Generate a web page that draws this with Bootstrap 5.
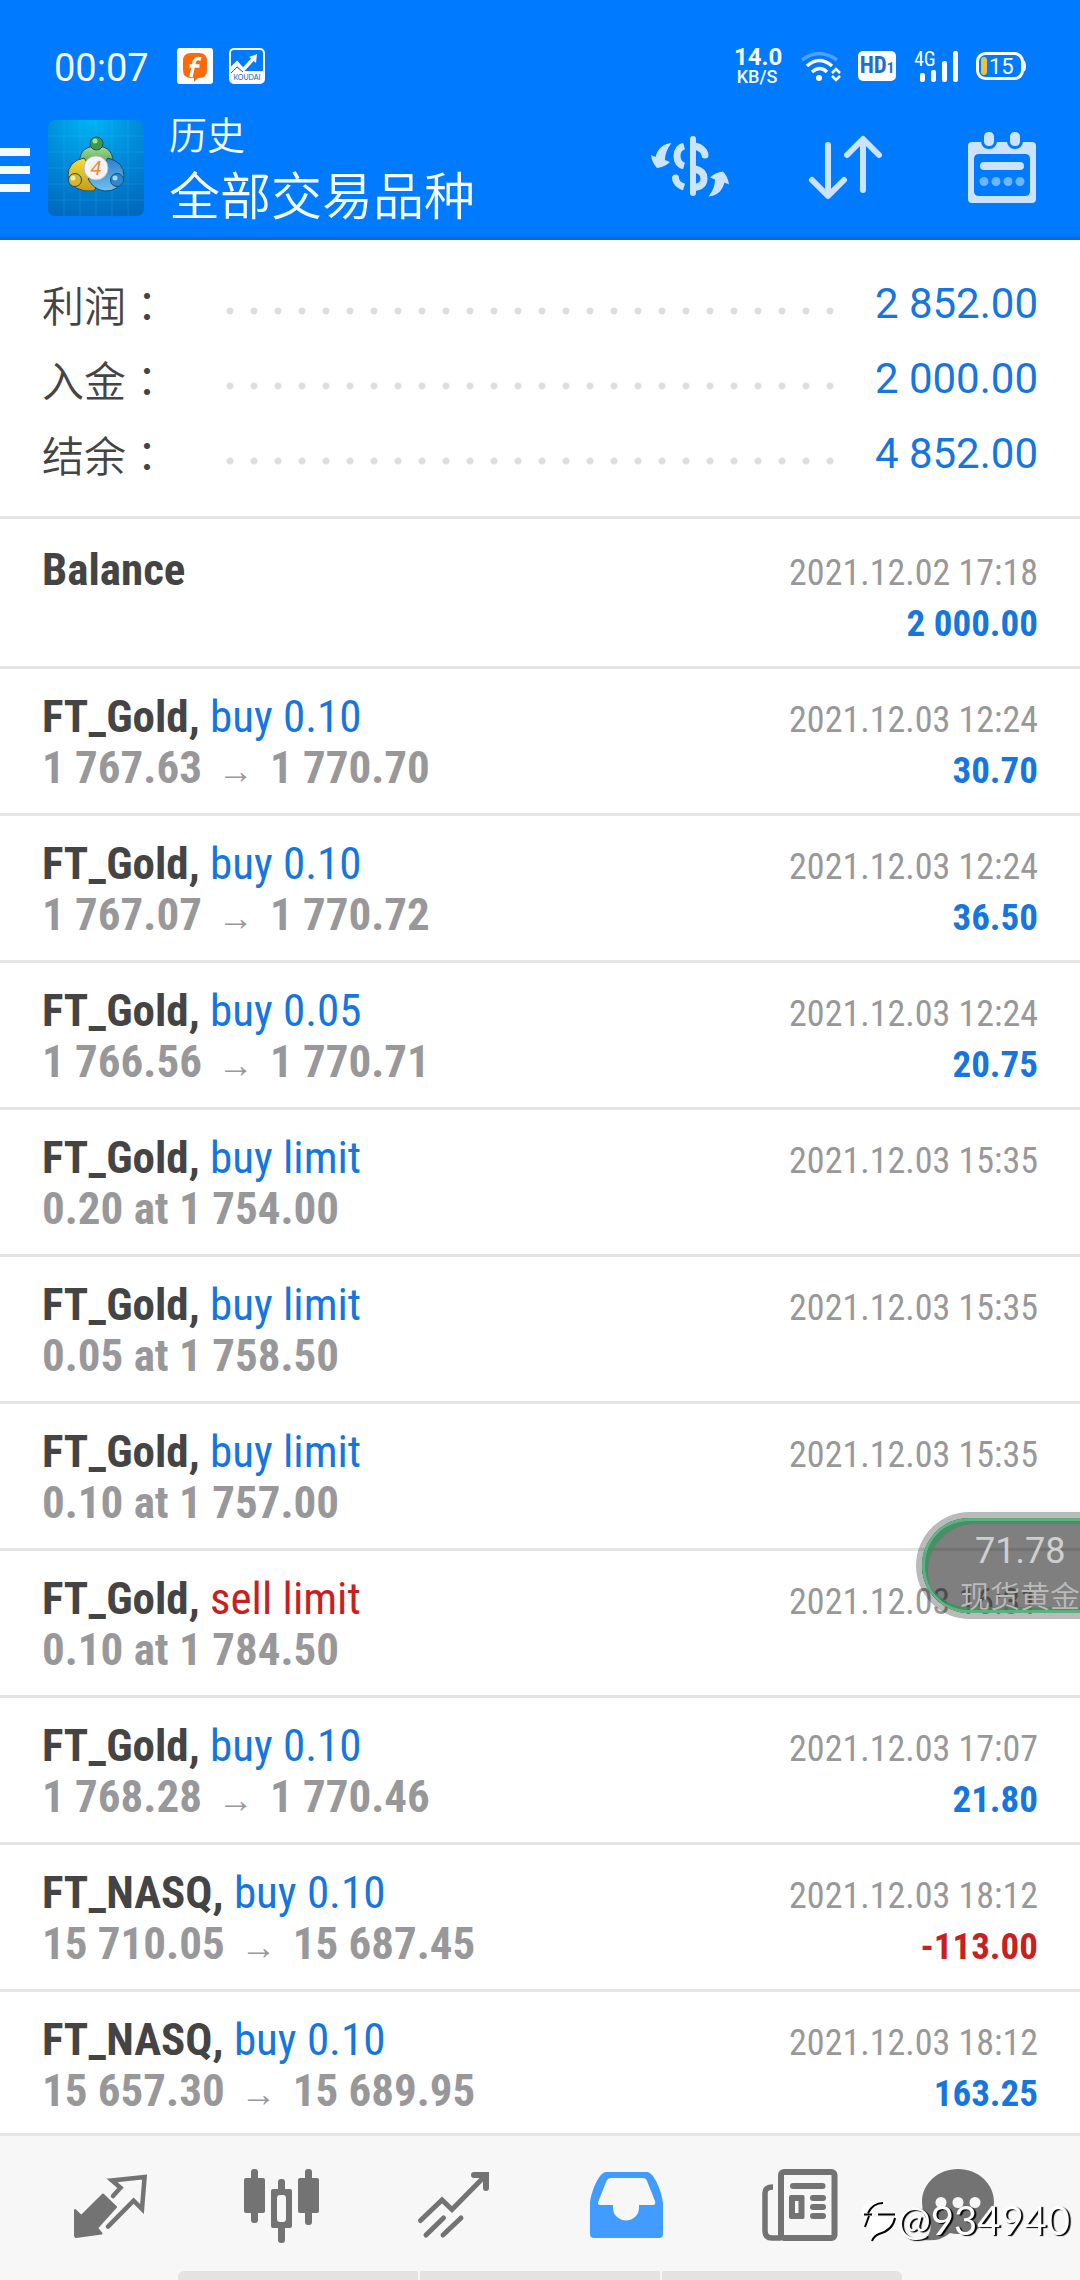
<!DOCTYPE html>
<html lang="zh-CN">
<head>
<meta charset="utf-8">
<meta name="viewport" content="width=device-width, initial-scale=1">
<title>历史</title>
<link rel="stylesheet" href="https://cdn.jsdelivr.net/npm/bootstrap@5.3.0/dist/css/bootstrap.min.css">
<style>
:root{--brand:#007aff;--up:#1476de;--down:#c8201e;--ink:#444;--mute:#98989a;--line:#e4e4e4;--tint:#cbe4fc;--bar:#f7f7f7}
body{font-family:Roboto,"Noto Sans CJK SC",sans-serif;color:var(--ink);background:#fff}
svg{display:block;overflow:visible}
.han{font-family:"Noto Sans CJK SC",sans-serif;font-weight:350}
.cond{font-family:"Roboto Condensed",Roboto,sans-serif}

.app-top{background:var(--brand);border-bottom:3px solid #0b6bd3;color:#f4fbff;padding-bottom:9px}
.status-bar{height:108px;padding:24px 54px 0}
.status-left{gap:16px}
.status-right{gap:18px}
.clock{font-size:38px;line-height:44px;margin-right:12px;padding-top:4px}
.net-speed{width:46px;font-size:18px;line-height:18px;font-weight:500;text-align:center}
.net-speed b{display:block;font-size:24px;line-height:22px}
.hd-badge{width:38px;height:30px;border-radius:5px;background:#fff;color:#1f6fd0;font-weight:700;font-size:23px;line-height:30px;text-align:center}
.hd-badge small{font-size:15px}

.title-bar{height:120px}
.icon-btn{background:none;border:0;padding:0;color:var(--tint)}
.menu-btn{width:30px;height:96px;margin-right:18px}
.tool{width:156px}
.titles{margin-left:25px}
.t-small{font-size:38px;line-height:50px}
.t-big{font-size:51px;line-height:70px}

.totals{padding:26px 42px 25px;font-size:42px;line-height:75px}
.totals dt{width:176px;height:75px}
.totals dd{color:var(--up);height:75px}
.wide-colon{font-family:"Noto Sans CJK TC",sans-serif}
.leader{height:23px;margin-right:32px;background:radial-gradient(circle,#dedede 3px,transparent 4px) left bottom/24px 8px repeat-x}

.deals{margin-bottom:144px;font-size:45px;line-height:51px}
.deal{border-top:3px solid var(--line);padding:22px 42px 20px}
.deal:first-child{padding-top:25px}
.deal span{color:var(--up)}
.prices{color:var(--mute);font-weight:700}
.prices i{font:400 36px/1 "Liberation Sans",sans-serif;margin:0 16px}
.when{font-size:36px;line-height:1}
.gain{font-size:37px;line-height:1}
.deal .when{color:var(--mute)}
.deal .gain{font-weight:700}
.deal .neg{color:var(--down)}

.tabs-bar{background:var(--bar);border-top:3px solid var(--line);height:147px}
.tabs-row{padding:0 24px}
.tabs-row a{color:#737373}
.tabs-row a.on{color:#429cff}
.home-bar{width:67%;height:9px;gap:2px}
.home-bar div{background:#e3e3e3}
.home-bar div:first-child{border-top-left-radius:6px}
.home-bar div:last-child{border-top-right-radius:6px}

.ticker{position:absolute;top:1512px;right:0;width:164px;height:107px;border:6px solid rgba(0,0,0,.27);border-right:0;border-radius:54px 0 0 54px;background:rgba(0,0,0,.5) padding-box;box-shadow:inset 3px 0 0 0 rgba(100,185,140,.8),inset 0 3px 0 0 rgba(100,185,140,.8),inset 0 -3px 0 0 rgba(100,185,140,.8),inset 6px 6px 0 0 rgba(50,150,90,.7),inset 0 -6px 0 0 rgba(50,150,90,.7);color:#cfcfcf;overflow:hidden;padding:11px 0 0 38px;white-space:nowrap}
.ticker b{display:block;font-weight:400;font-size:36px;line-height:44px;padding-left:15px}
.ticker span{display:block;font-size:30px;line-height:42px;color:#bababa}
.stamp{position:fixed;right:10px;bottom:34px;z-index:1040;color:#fff;font:400 40px/52px Lato,sans-serif;text-shadow:2px 1px 1px #000;gap:2px}
</style>
</head>
<body>
<header class="app-top">
  <div class="status-bar d-flex align-items-center justify-content-between">
    <div class="status-left d-flex align-items-center">
      <span class="clock">00:07</span>
      <svg width="36" height="36" viewBox="0 0 36 36"><rect width="36" height="36" rx="3" fill="#fff"/><path d="M14 5h8q8 0 8 8v9q0 8-8 8h-1l-4 4v-4h-3q-8 0-8-8v-9q0-8 8-8z" fill="#fb6a0c"/><path d="M24 11q-6-2-7 4l-3 14M12.500 18h10" fill="none" stroke="#fff" stroke-width="3.500"/></svg>
      <svg width="36" height="36" viewBox="0 0 36 36"><rect x="1" y="1" width="34" height="34" rx="4" fill="none" stroke="#fff" stroke-width="2"/><path d="M2 22l5-5 5 5 3 1h19v11H2z" fill="#fff"/><path d="M2 21l6-6 6 7L25 10" fill="none" stroke="#fff" stroke-width="3.500"/><path d="M28 6l-1 9-7-6z" fill="#fff"/><path d="M2 25l6-6 6 5" fill="none" stroke="#1a5fb4" stroke-width="1"/><text x="18" y="32" text-anchor="middle" font-family="Lato" font-size="7" fill="#1a5fb4">KOUDAI</text></svg>
    </div>
    <div class="status-right d-flex align-items-center">
      <div class="net-speed"><b>14.0</b>KB/S</div>
      <svg width="42" height="32" viewBox="0 0 42 32" fill="none" stroke="#fff" stroke-width="3.500"><path d="M4 10Q21-3 39 10" stroke="#4da2ff"/><path d="M9 16q12-11 25 0M14 22q8-7 15 0"/><circle cx="21" cy="28" r="3" fill="#fff" stroke="none"/><path d="M34 23l4-4 4 4M34 26l4 4 4-4" stroke-width="2.500"/></svg>
      <div class="hd-badge cond">HD<small>1</small></div>
      <svg width="44" height="32" viewBox="0 0 44 32"><text x="0" y="16" font-family="Roboto Condensed" font-size="20" fill="#fff">4G</text><g fill="#fff"><rect x="6" y="23" width="5" height="9" rx="2"/><rect x="17" y="20" width="5" height="12" rx="2"/><rect x="28" y="11" width="5" height="21" rx="2"/><rect x="39" y="1" width="5" height="31" rx="2"/></g></svg>
      <svg width="50" height="28" viewBox="0 0 50 28"><rect x="1.500" y="1.500" width="45" height="25" rx="8" fill="none" stroke="#fff" stroke-width="3"/><path d="M48 9q2 5 0 10z" fill="#fff" stroke="#fff" stroke-width="2"/><rect x="5" y="5" width="6" height="18" rx="3" fill="#edc03c"/><text x="13" y="22" font-family="Roboto" font-size="22" fill="#fff">15</text></svg>
    </div>
  </div>
  <div class="title-bar d-flex align-items-center">
    <button class="icon-btn menu-btn" aria-label="菜单"><svg width="30" height="96" viewBox="0 0 30 96" fill="#f4fbff"><path d="M0 28h30v8H0zM0 46h30v8H0zM0 64h30v8H0z"/></svg></button>
    <svg width="96" height="96" viewBox="0 0 96 96">
      <defs>
        <radialGradient id="bgA" cx=".45" cy="0" r="1.1"><stop offset="0" stop-color="#00b4f4"/><stop offset=".5" stop-color="#0088d8"/><stop offset="1" stop-color="#0066ba"/></radialGradient>
        <linearGradient id="gG" x2="0" y2="1"><stop offset="0" stop-color="#a8dc90"/><stop offset="1" stop-color="#2c8a3c"/></linearGradient>
        <linearGradient id="gY" x2="0" y2="1"><stop offset="0" stop-color="#f3dc3e"/><stop offset="1" stop-color="#c99b17"/></linearGradient>
        <linearGradient id="gB" x2="0" y2="1"><stop offset="0" stop-color="#2b7fc8"/><stop offset="1" stop-color="#6fc0f5"/></linearGradient>
      </defs>
      <rect width="96" height="96" rx="7" fill="url(#bgA)"/>
      <path d="M16 0v96M32 0v96M48 0v96M64 0v96M80 0v96M0 16h96M0 32h96M0 48h96M0 64h96M0 80h96" stroke="#4cc3f5" stroke-width="1" opacity=".2"/>
      <g stroke="#14506c" stroke-width="1">
        <path d="M32 47q-3-20 16-21 19 0 17 21l-3 7h-28z" fill="url(#gG)"/>
        <path d="M36 38q-16 3-16 18 4 17 26 15l6-10z" fill="url(#gY)"/>
        <path d="M60 38q16 4 16 18-4 16-20 15-11-2-16-12l8-5z" fill="url(#gB)"/>
        <circle cx="48.500" cy="23.500" r="6.500" fill="#3e9a48"/><circle cx="27" cy="60" r="6.500" fill="#d8b52c"/><circle cx="69" cy="60" r="6.500" fill="#2f86d0"/>
      </g>
      <circle cx="47" cy="21" r="2.500" fill="#a9dfa0"/><circle cx="25" cy="58" r="2.500" fill="#f8ea9a"/><circle cx="67" cy="58" r="2.500" fill="#a6d8fa"/>
      <circle cx="48" cy="48" r="12" fill="#f4f4f4" stroke="#bbb"/><text x="48" y="55" text-anchor="middle" font-family="Roboto" font-style="italic" font-size="20" fill="#f08a34">4</text>
    </svg>
    <div class="titles flex-grow-1 han"><div class="t-small">历史</div><div class="t-big">全部交易品种</div></div>
    <button class="icon-btn tool" aria-label="币种"><svg class="mx-auto" width="88" height="88" viewBox="0 0 88 88"><g fill="none" stroke="currentColor" stroke-width="7"><path d="M47 15v54" stroke-width="6" stroke-linecap="round"/><path d="M38 22q-7 2-7 10t7 10M38 63q-7-2-8.500-8" /><path d="M49 22q8 2 10 8M49 45q9 2 9 9.500T49 63.500"/><path d="M29.500 54v0M59 31v0" stroke-linecap="round"/></g><g fill="currentColor"><path id="sw" d="M25.500 19Q13 20 9.500 33L5 31q1 8 6 13 8-1 13-6l-5-2q0-9 6.500-17z"/><use href="#sw" transform="rotate(180 44 45.700)"/></g></svg></button>
    <button class="icon-btn tool" aria-label="排序"><svg class="mx-auto" width="88" height="88" viewBox="0 0 88 88" fill="none" stroke="currentColor" stroke-width="6" stroke-linecap="round" stroke-linejoin="round"><path d="M26 21v50M10 56l16 16 16-16M61 66V16M45 31l16-16 16 16"/></svg></button>
    <button class="icon-btn tool" aria-label="日历"><svg class="mx-auto" width="88" height="88" viewBox="0 0 88 88"><path fill="currentColor" fill-rule="evenodd" d="M14 18h60q4 0 4 4v53q0 4-4 4H14q-4 0-4-4V22q0-4 4-4zM21 30q-5 0-5 5v32q0 5 5 5h46q5 0 5-5V35q0-5-5-5z"/><g fill="currentColor" stroke="#007aff" stroke-width="3"><rect x="24.500" y="6.500" width="13" height="17" rx="6"/><rect x="50.500" y="6.500" width="13" height="17" rx="6"/></g><rect x="22" y="38" width="44" height="8" rx="4" fill="currentColor"/><g fill="#6fb4ff"><circle cx="26" cy="57.500" r="4.500"/><circle cx="38" cy="57.500" r="4.500"/><circle cx="50" cy="57.500" r="4.500"/><circle cx="62" cy="57.500" r="4.500"/></g></svg></button>
  </div>
</header>

<main>
  <dl class="totals mb-0">
    <div class="d-flex align-items-center"><dt class="han">利润<span class="wide-colon" lang="zh-TW">：</span></dt><div class="leader flex-grow-1"></div><dd class="mb-0">2 852.00</dd></div>
    <div class="d-flex align-items-center"><dt class="han">入金<span class="wide-colon" lang="zh-TW">：</span></dt><div class="leader flex-grow-1"></div><dd class="mb-0">2 000.00</dd></div>
    <div class="d-flex align-items-center"><dt class="han">结余<span class="wide-colon" lang="zh-TW">：</span></dt><div class="leader flex-grow-1"></div><dd class="mb-0">4 852.00</dd></div>
  </dl>

  <ul class="deals cond list-unstyled">
    <li class="deal d-flex justify-content-between"><div><b>Balance</b></div><div class="text-end"><div><span class="when">2021.12.02 17:18</span></div><div><span class="gain">2 000.00</span></div></div></li>
    <li class="deal d-flex justify-content-between"><div><div><b>FT_Gold,</b> <span>buy 0.10</span></div><div class="prices">1 767.63<i>→</i>1 770.70</div></div><div class="text-end"><div><span class="when">2021.12.03 12:24</span></div><div><span class="gain">30.70</span></div></div></li>
    <li class="deal d-flex justify-content-between"><div><div><b>FT_Gold,</b> <span>buy 0.10</span></div><div class="prices">1 767.07<i>→</i>1 770.72</div></div><div class="text-end"><div><span class="when">2021.12.03 12:24</span></div><div><span class="gain">36.50</span></div></div></li>
    <li class="deal d-flex justify-content-between"><div><div><b>FT_Gold,</b> <span>buy 0.05</span></div><div class="prices">1 766.56<i>→</i>1 770.71</div></div><div class="text-end"><div><span class="when">2021.12.03 12:24</span></div><div><span class="gain">20.75</span></div></div></li>
    <li class="deal d-flex justify-content-between"><div><div><b>FT_Gold,</b> <span>buy limit</span></div><div class="prices">0.20 at 1 754.00</div></div><div class="text-end"><span class="when">2021.12.03 15:35</span></div></li>
    <li class="deal d-flex justify-content-between"><div><div><b>FT_Gold,</b> <span>buy limit</span></div><div class="prices">0.05 at 1 758.50</div></div><div class="text-end"><span class="when">2021.12.03 15:35</span></div></li>
    <li class="deal d-flex justify-content-between"><div><div><b>FT_Gold,</b> <span>buy limit</span></div><div class="prices">0.10 at 1 757.00</div></div><div class="text-end"><span class="when">2021.12.03 15:35</span></div></li>
    <li class="deal d-flex justify-content-between"><div><div><b>FT_Gold,</b> <span class="neg">sell limit</span></div><div class="prices">0.10 at 1 784.50</div></div><div class="text-end"><span class="when">2021.12.03 16:31</span></div></li>
    <li class="deal d-flex justify-content-between"><div><div><b>FT_Gold,</b> <span>buy 0.10</span></div><div class="prices">1 768.28<i>→</i>1 770.46</div></div><div class="text-end"><div><span class="when">2021.12.03 17:07</span></div><div><span class="gain">21.80</span></div></div></li>
    <li class="deal d-flex justify-content-between"><div><div><b>FT_NASQ,</b> <span>buy 0.10</span></div><div class="prices">15 710.05<i>→</i>15 687.45</div></div><div class="text-end"><div><span class="when">2021.12.03 18:12</span></div><div><span class="gain neg">-113.00</span></div></div></li>
    <li class="deal d-flex justify-content-between"><div><div><b>FT_NASQ,</b> <span>buy 0.10</span></div><div class="prices">15 657.30<i>→</i>15 689.95</div></div><div class="text-end"><div><span class="when">2021.12.03 18:12</span></div><div><span class="gain">163.25</span></div></div></li>
  </ul>
</main>

<aside class="ticker"><b>71.78</b><span class="han">现货黄金</span></aside>

<nav class="tabs-bar fixed-bottom d-flex flex-column">
  <div class="tabs-row d-flex align-items-center flex-grow-1">
    <a class="flex-fill" href="#" aria-label="行情"><svg class="mx-auto" width="88" height="88" viewBox="0 0 88 88"><path d="M37 34.500L50 47 31 68l4.500 5.500L10 77 9 76V50l6.300 6z" fill="currentColor" stroke="currentColor" stroke-width="2" stroke-linejoin="round"/><path d="M47 36l7.500-8.300L46 20.500l32.600-3.500L76 49l-8.400-8.300L42 66.700" fill="none" stroke="currentColor" stroke-width="4.500" stroke-linecap="round"/></svg></a>
    <a class="flex-fill" href="#" aria-label="图表"><svg class="mx-auto" width="88" height="88" viewBox="0 0 88 88" fill="currentColor"><rect x="13" y="9" width="7" height="54" rx="3"/><rect x="6" y="18" width="21" height="35" rx="2"/><rect x="40" y="19" width="7" height="64" rx="3"/><rect x="33" y="29" width="21" height="39" rx="2"/><rect x="39" y="35" width="9" height="27" rx="3" fill="#f7f7f7"/><rect x="67" y="9" width="7" height="56" rx="3"/><rect x="60" y="18" width="21" height="35" rx="2"/></svg></a>
    <a class="flex-fill" href="#" aria-label="交易"><svg class="mx-auto" width="88" height="88" viewBox="0 0 88 88" fill="none" stroke="currentColor" stroke-width="5" stroke-linecap="round"><path d="M10.500 60.500L32 40l10 9.500L75 16"/><path d="M64 15h12v13" stroke-width="6"/><path d="M16 75l17.500-17M33 75l18-17"/></svg></a>
    <a class="flex-fill on" href="#" aria-label="历史"><svg class="mx-auto" width="88" height="88" viewBox="0 0 88 88"><path fill="currentColor" fill-rule="evenodd" d="M24 12h41c7 0 15 20 16 31v31q0 4-4 4H12q-4 0-4-4V43c1-11 9-31 16-31zM29 18q-3 0-4.500 3l-8 20q-1.500 4 1.500 4h13v3a13 12.500 0 0 0 26 0v-3h14q3 0 2-4l-8-20q-1-3-4-3z"/></svg></a>
    <a class="flex-fill" href="#" aria-label="新闻"><svg class="mx-auto" width="88" height="88" viewBox="0 0 88 88" fill="currentColor"><rect x="27" y="12" width="53.500" height="66" rx="3" fill="none" stroke="currentColor" stroke-width="6"/><path d="M19 27q-8 0-8 6v38q0 7 7 7h9" fill="none" stroke="currentColor" stroke-width="5.500"/><rect x="36" y="23" width="35.500" height="6" rx="3"/><rect x="56" y="35" width="16" height="6" rx="3"/><rect x="56" y="44" width="16" height="6" rx="3"/><rect x="56" y="53" width="16" height="6" rx="3"/><path fill-rule="evenodd" d="M37 35h12q1.500 0 1.500 2v20q0 2-1.500 2H37q-2 0-2-2V37q0-2 2-2zM41 41v12h3.500V41z"/></svg></a>
    <a class="flex-fill" href="#" aria-label="消息"><svg class="mx-auto" width="88" height="88" viewBox="0 0 88 88"><path fill="currentColor" d="M32 9c20 0 36 14.500 36 33S52 74 32 74q-4 0-8-1-10 9-26 7 6-4 7-15-9-9-9-23C-4 23.500 12 9 32 9z"/><g fill="#f7f7f7"><circle cx="15" cy="42.500" r="5.500"/><circle cx="32" cy="42.500" r="5.500"/><circle cx="49" cy="42.500" r="5.500"/></g></svg></a>
  </div>
  <div class="home-bar d-flex mx-auto"><div class="flex-fill"></div><div class="flex-fill"></div><div class="flex-fill"></div></div>
</nav>
<div class="stamp d-flex align-items-center">
  <svg width="36" height="42" viewBox="0 0 36 42" fill="none"><path d="M2 15Q3 3 15 1q8-1 9 3-7 0-10 6l-1 5zM13 18h23q0 9-8 13-8 4-12 10l-2-2q-4-5-1-9-5-3-4-9z" fill="#fff"/><path d="M9 14Q14 4 24 4M5 15.500h8M10 17L6 28M19 15.500h17M36 19q-2 12-16 16-5 2-7 7" stroke="#000" stroke-width="2"/></svg>
  <span>@934940</span>
</div>
<script src="https://cdn.jsdelivr.net/npm/bootstrap@5.3.0/dist/js/bootstrap.bundle.min.js"></script>
</body>
</html>
